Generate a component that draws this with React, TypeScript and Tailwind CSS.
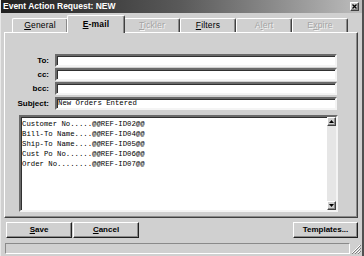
import React from 'react';

const raised =
  'bg-[#d0d0d0] border border-t-white border-l-white border-r-[#404040] border-b-[#404040] shadow-[inset_-1px_-1px_0_#8a8a8a]';
const sunken =
  'bg-white border-2 border-t-[#6a6a6a] border-l-[#6a6a6a] border-r-[#f4f4f4] border-b-[#f4f4f4] shadow-[inset_1px_1px_0_#303030]';

type TabProps = { children: React.ReactNode; active?: boolean; disabled?: boolean };

const Tab: React.FC<TabProps> = ({ children, active, disabled }) => (
  <div
    className={
      'flex items-center justify-center rounded-t-[2px] border-t border-l border-t-white border-l-white border-r border-r-[#404040] shadow-[inset_-1px_0_0_#8a8a8a] ' +
      (active
        ? 'relative z-10 w-[58px] -mx-[1px] h-[18px] mb-[-1px] bg-[#d0d0d0] font-bold text-black'
        : 'w-[56px] h-[14px] bg-[#d0d0d0] font-normal ') +
      (disabled ? ' text-[#a4a4a4] [text-shadow:1px_1px_0_#f4f4f4]' : ' text-black')
    }
  >
    <span className="text-[8.5px] leading-none tracking-[0.2px]">{children}</span>
  </div>
);

const Field: React.FC<{ label: string; value?: string; className?: string }> = ({ label, value, className }) => (
  <div className={'flex items-center ' + (className ?? '')}>
    <div className="w-[46px] pr-[2px] text-right text-[8px] font-bold text-black">{label}</div>
    <div className={sunken + ' ml-[4px] w-[282px] h-[13px] flex items-center pl-[1px]'}>
      {value && <span className="font-['Liberation_Mono',monospace] text-[7.3px] leading-none text-black">{value}</span>}
    </div>
  </div>
);

const Btn: React.FC<{ children: React.ReactNode; className?: string }> = ({ children, className }) => (
  <button
    className={
      'h-[16px] flex items-center justify-center border border-t-white border-l-white border-r-[#202020] border-b-[#202020] bg-[#d0d0d0] shadow-[inset_-1px_-1px_0_#8a8a8a] text-[8px] font-bold text-black ' +
      (className ?? '')
    }
  >
    {children}
  </button>
);

const lines = [
  'Customer No.....@@REF-ID02@@',
  'Bill-To Name....@@REF-ID04@@',
  'Ship-To Name....@@REF-ID05@@',
  'Cust Po No......@@REF-ID06@@',
  'Order No........@@REF-ID07@@',
];

export default function App() {
  return (
    <div className="w-[364px] h-[256px] overflow-hidden bg-[#d0d0d0] font-['Liberation_Sans',Arial,sans-serif] flex flex-col border-l border-l-[#e8e8e8] border-r-2 border-r-[#505050]">
      {/* title bar */}
      <div className="h-[13px] flex items-center justify-between bg-gradient-to-r from-[#202020] via-[#5a5a5a] to-[#bdbdbd] pl-[2px] pr-[3px]">
        <span className="text-[8.5px] font-bold text-white leading-none">Event Action Request: NEW</span>
        <div className={raised + ' w-[9px] h-[9px] flex items-center justify-center'}>
          <svg width="5" height="5" viewBox="0 0 5 5">
            <path d="M0.5 0.5 L4.5 4.5 M4.5 0.5 L0.5 4.5" stroke="#000" strokeWidth="1.3" />
          </svg>
        </div>
      </div>

      {/* tabs */}
      <div className="mt-[2px] h-[17px] flex items-end pl-[11px]">
        <Tab>
          <span className="underline">G</span>eneral
        </Tab>
        <Tab active>
          <span className="underline">E</span>-mail
        </Tab>
        <Tab disabled>
          <span className="underline">T</span>ickler
        </Tab>
        <Tab>
          <span className="underline">F</span>ilters
        </Tab>
        <Tab disabled>
          A<span className="underline">l</span>ert
        </Tab>
        <Tab disabled>
          E<span className="underline">x</span>pire
        </Tab>
      </div>

      {/* panel */}
      <div className="ml-[3px] w-[354px] h-[186px] border border-t-white border-l-white border-r-[#404040] border-b-[#404040] shadow-[inset_-1px_-1px_0_#8a8a8a] flex flex-col pt-[21px]">
        <Field label="To:" />
        <Field label="cc:" className="mt-[1px]" />
        <Field label="bcc:" className="mt-[1px]" />
        <Field label="Subject:" value="New Orders Entered" className="mt-[2px]" />

        <div className={sunken + ' ml-[14px] mt-[5px] w-[319px] h-[97px] flex'}>
          <div className="flex-1 pl-[1px] pt-[2px] font-['Liberation_Mono',monospace] text-[7.3px] leading-[10px] text-black whitespace-pre">
            {lines.map((l) => (
              <div key={l}>{l}</div>
            ))}
          </div>
          <div className="w-[9px] flex flex-col bg-[#e6e6e6]">
            <div className={raised + ' h-[9px] flex items-center justify-center'}>
              <svg width="5" height="3" viewBox="0 0 5 3">
                <path d="M2.5 0 L5 3 L0 3 Z" fill="#000" />
              </svg>
            </div>
            <div className="flex-1" />
            <div className={raised + ' h-[9px] flex items-center justify-center'}>
              <svg width="5" height="3" viewBox="0 0 5 3">
                <path d="M0 0 L5 0 L2.5 3 Z" fill="#000" />
              </svg>
            </div>
          </div>
        </div>
      </div>

      {/* buttons */}
      <div className="mt-[4px] flex pl-[5px] pr-[4px]">
        <Btn className="w-[66px]">
          <span className="underline">S</span>ave
        </Btn>
        <Btn className="w-[66px] ml-[1px]">
          <span className="underline">C</span>ancel
        </Btn>
        <Btn className="w-[65px] ml-auto">Templates...</Btn>
      </div>

      {/* status bar */}
      <div className="mt-[5px] flex items-end pl-[4px]">
        <div className="w-[345px] h-[11px] border border-t-[#8a8a8a] border-l-[#8a8a8a] border-r-white border-b-white" />
        <svg width="10" height="10" viewBox="0 0 10 10" className="ml-[1px]">
          <path d="M9 1 L1 9 M9 4 L4 9 M9 7 L7 9" stroke="#ffffff" strokeWidth="1" />
          <path d="M10 1 L1 10 M10 4 L4 10 M10 7 L7 10" stroke="#808080" strokeWidth="1" />
        </svg>
      </div>
    </div>
  );
}
